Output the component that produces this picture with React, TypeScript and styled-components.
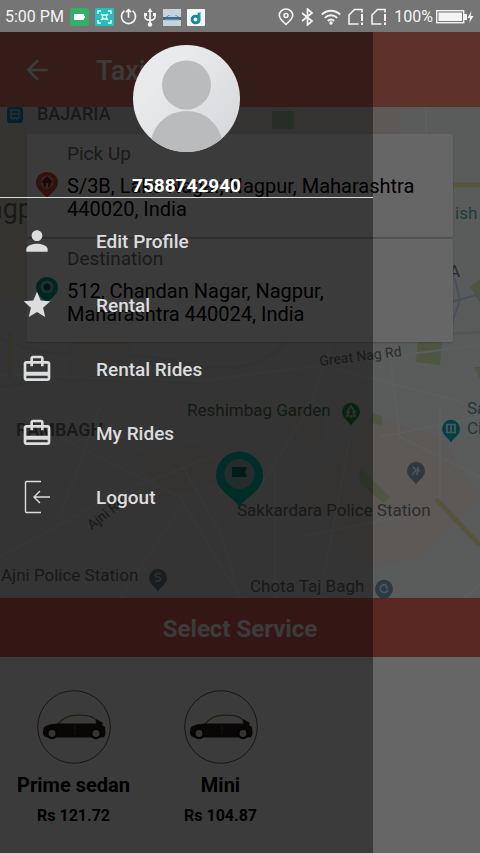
import React from "react";
import styled, { createGlobalStyle, css } from "styled-components";

const GlobalStyle = createGlobalStyle`
  *, *::before, *::after { box-sizing: border-box; }
  body { margin: 0; background: #fff; font-family: Roboto, "Liberation Sans", sans-serif; }
  h1, h2, p, ul { margin: 0; padding: 0; }
  ul { list-style: none; }
  button { font: inherit; border: 0; padding: 0; background: none; text-align: left; cursor: pointer; }
  svg { display: block; flex: none; }
`;

const Screen = styled.div`
  display: flex;
  flex-direction: column;
  min-height: 100vh;
`;

const StatusBar = styled.div`
  display: flex;
  align-items: center;
  justify-content: space-between;
  height: 32px;
  padding: 2px 6px 0 5px;
  background: #757575;
  color: #f4f4f4;
  font-size: 16px;
  line-height: 20px;
`;

const StatusGroup = styled.div<{ $gap: number }>`
  display: flex;
  align-items: center;
  gap: ${(p) => p.$gap}px;
  white-space: nowrap;
`;

const Stage = styled.div`
  position: relative;
  flex: 1;
  display: flex;
  flex-direction: column;
`;

const Page = styled.main`
  flex: 1;
  display: flex;
  flex-direction: column;
`;

const AppBar = styled.header`
  display: flex;
  align-items: center;
  gap: 43px;
  height: 75px;
  padding: 0 21px;
  background: #eb7a6c;
  color: #fff;
`;

const BackButton = styled.button`
  color: inherit;
`;

const Title = styled.h1`
  padding-top: 2px;
  font-size: 27px;
  font-weight: 500;
  line-height: 32px;
`;

const MapArea = styled.section`
  position: relative;
  isolation: isolate;
  flex: 1;
  padding: 27px;
  overflow: hidden;
  background: #e2e3e3;
`;

const MapDrawing = styled.svg`
  position: absolute;
  inset: 0;
  z-index: -1;
  width: 100%;
  height: 100%;
`;

const Place = styled.span<{ $x: number; $y: number; $color?: string; $size?: number; $bold?: boolean; $turn?: number }>`
  position: absolute;
  z-index: -1;
  left: ${(p) => p.$x}px;
  top: ${(p) => p.$y}px;
  color: ${(p) => p.$color ?? "#6c6e70"};
  font-size: ${(p) => p.$size ?? 17}px;
  font-weight: ${(p) => (p.$bold ? 500 : 400)};
  line-height: 20px;
  white-space: pre;
  ${(p) => p.$turn && css`transform: rotate(${p.$turn}deg);`}
`;

const Marker = styled.svg<{ $x: number; $y: number }>`
  position: absolute;
  z-index: -1;
  left: ${(p) => p.$x}px;
  top: ${(p) => p.$y}px;
`;

const Cards = styled.div`
  display: grid;
  gap: 2px;
`;

const Card = styled.button`
  display: grid;
  grid-template-columns: 24px 1fr;
  column-gap: 8px;
  align-content: start;
  width: 100%;
  height: 103px;
  padding: 8px 28px 8px 8px;
  border-radius: 2px;
  background: #fff;
  box-shadow: 0 1px 2px rgba(0, 0, 0, 0.2);
`;

const CardLabel = styled.span`
  grid-column: 2;
  color: #757575;
  font-size: 19px;
  line-height: 24px;
`;

const CardPin = styled.span`
  padding-top: 5px;
`;

const Address = styled.span`
  padding-top: 9px;
  color: #000;
  font-size: 20px;
  line-height: 23px;
`;

const ServiceBand = styled.h2`
  padding: 16px 0 13px;
  background: #e16557;
  color: #fff;
  font-size: 24px;
  font-weight: 700;
  line-height: 30px;
  text-align: center;
`;

const Services = styled.ul`
  display: flex;
  min-height: 196px;
  padding-top: 33px;
  background: #fff;
`;

const ServiceButton = styled.button`
  display: flex;
  flex-direction: column;
  align-items: center;
  width: 147px;
  color: #000;
  font-weight: 700;
`;

const ServiceName = styled.span`
  padding-top: 9px;
  font-size: 20px;
  line-height: 24px;
`;

const ServicePrice = styled.span`
  padding-top: 9px;
  font-size: 16px;
  line-height: 20px;
`;

const Scrim = styled.div`
  position: absolute;
  inset: 0;
  background: rgba(0, 0, 0, 0.6);
`;

const Drawer = styled.aside`
  position: absolute;
  inset: 0 auto 0 0;
  width: 373px;
  max-width: 85%;
  background: rgba(0, 0, 0, 0.42);
`;

const Account = styled.div`
  display: flex;
  flex-direction: column;
  align-items: center;
  gap: 23px;
  padding-top: 13px;
  border-bottom: 1px solid #dcdcdc;
  color: #fff;
  font-size: 19px;
  font-weight: 700;
  line-height: 22px;
`;

const Menu = styled.ul`
  padding: 11px 0;
`;

const MenuButton = styled.button`
  display: flex;
  align-items: center;
  gap: 43px;
  width: 100%;
  height: 64px;
  padding: 0 21px;
  color: #dcdddf;
  font-size: 19px;
  font-weight: 500;
  line-height: 24px;
`;

const MenuLabel = styled.span`
  padding-top: 2px;
`;

const BatteryApp = () => (
  <svg width="19" height="18" viewBox="0 0 19 18">
    <rect width="19" height="18" rx="2" fill="#35ae68" />
    <rect x="4" y="6" width="10" height="6" rx="1" fill="#fff" />
    <rect x="14" y="8" width="1" height="2" fill="#fff" />
  </svg>
);

const ScanApp = () => (
  <svg width="19" height="18" viewBox="0 0 19 18" fill="none" stroke="#e9ffff" strokeWidth="1.4">
    <rect width="19" height="18" rx="1" fill="#27bdb9" stroke="none" />
    <path d="M3 6V3h3M13 3h3v3M3 12v3h3M13 15h3v-3M6 6l2 2M13 6l-2 2M6 12l2-2M13 12l-2-2" />
    <rect x="7.5" y="7" width="4" height="4" />
  </svg>
);

const PowerIcon = () => (
  <svg width="17" height="18" viewBox="0 0 17 18" fill="none" stroke="#f4f4f4" strokeWidth="1.7" strokeLinecap="round">
    <path d="M4 3.2a7 7 0 1 0 9 0M8.500 2v7M6.500 3.600l2-2 2 2" />
  </svg>
);

const UsbIcon = () => (
  <svg width="14" height="19" viewBox="0 0 14 19" fill="none" stroke="#f4f4f4" strokeWidth="1.7">
    <path d="M7 3v13M2 6v3c0 2 1.500 3 5 3.500M12 6v3c0 2-1.500 3-5 3.500" />
    <path d="M7 0l2.500 4h-5z" fill="#f4f4f4" stroke="none" />
    <rect x="1" y="5" width="3" height="3" fill="#f4f4f4" stroke="none" />
    <rect x="10" y="5" width="3" height="3" fill="#f4f4f4" stroke="none" />
    <circle cx="7" cy="16.500" r="2.200" fill="#f4f4f4" stroke="none" />
  </svg>
);

const CarApp = () => (
  <svg width="18" height="17" viewBox="0 0 18 17">
    <rect width="18" height="17" fill="#c9d3da" />
    <path d="M0 8h3l3-2h7l3 2h2v3H0z" fill="#3f6a88" />
    <path d="M4 8l3-2h5l3 2z" fill="#b7d3e4" />
    <path d="M2 11h14" stroke="#8eb3cc" />
  </svg>
);

const DApp = () => (
  <svg width="18" height="17" viewBox="0 0 18 17">
    <rect width="18" height="17" rx="1" fill="#f3f8fa" />
    <circle cx="8.500" cy="10.500" r="3.400" fill="none" stroke="#1781a6" strokeWidth="2.800" />
    <path d="M13.500 2v9c0 2-1 3-2.500 4l-.5-11c2 0 3-1 3-2z" fill="#1a93a8" />
  </svg>
);

const LocationIcon = () => (
  <svg width="16" height="18" viewBox="0 0 16 18" fill="none" stroke="#f4f4f4" strokeWidth="1.600">
    <path d="M8 16.500C4 13 1.300 10.500 1.300 7.300a6.700 6.300 0 0 1 13.400 0C14.700 10.500 12 13 8 16.500z" />
    <circle cx="8" cy="7.500" r="2" />
  </svg>
);

const BluetoothIcon = () => (
  <svg width="13" height="18" viewBox="0 0 13 18" fill="none" stroke="#f4f4f4" strokeWidth="1.700">
    <path d="M1 5l10 8-4.500 4V1L11 5 1 13" />
  </svg>
);

const WifiIcon = () => (
  <svg width="20" height="16" viewBox="0 0 20 16" fill="none" stroke="#f4f4f4" strokeWidth="1.800">
    <path d="M.8 5.500c5.300-5 13-5 18.400 0M3.800 8.800c3.600-3.400 8.800-3.400 12.400 0M6.800 12c2-1.800 4.400-1.800 6.400 0" />
    <circle cx="10" cy="14" r="1.700" fill="#f4f4f4" stroke="none" />
  </svg>
);

const SimIcon = () => (
  <svg width="16" height="18" viewBox="0 0 16 18" fill="none" stroke="#f4f4f4" strokeWidth="1.600">
    <path d="M10.500 16H1V7l5.500-5.500h7.500v3" />
    <path d="M14 6v7M14 14.500v2.500" strokeWidth="2" />
  </svg>
);

const BatteryIcon = () => (
  <svg width="38" height="14" viewBox="0 0 38 14" fill="#f4f4f4">
    <rect x=".7" y=".7" width="27" height="12" fill="none" stroke="#f4f4f4" strokeWidth="1.400" />
    <rect x="2.500" y="2.500" width="23.500" height="8.500" />
    <rect x="28" y="4" width="3" height="6" />
    <path d="M35.500 1L31.500 8h2.700l-1 5 4.300-7h-2.800z" />
  </svg>
);

const ArrowBack = () => (
  <svg width="32" height="32" viewBox="0 0 24 24" fill="currentColor" aria-hidden="true">
    <path d="M20 11H7.830l5.590-5.590L12 4l-8 8 8 8 1.410-1.410L7.830 13H20v-2z" />
  </svg>
);

const AvatarPicture = () => (
  <svg width="107" height="107" viewBox="0 0 107 107" role="img" aria-label="Profile picture">
    <defs>
      <linearGradient id="face" x1="0" y1="0" x2="1" y2="1">
        <stop offset=".3" stopColor="#e9eaec" />
        <stop offset="1" stopColor="#d3d5d8" />
      </linearGradient>
      <clipPath id="disc"><circle cx="53.500" cy="53.500" r="53.500" /></clipPath>
    </defs>
    <g clipPath="url(#disc)">
      <rect width="107" height="107" fill="url(#face)" />
      <circle cx="53.500" cy="40" r="24.500" fill="#b9bbbd" />
      <path d="M17 107V101C19 80 34 66 53.500 66S88 80 90 101v6z" fill="#b9bbbd" />
    </g>
  </svg>
);

const menuPaths = {
  person: "M12 12c2.210 0 4-1.790 4-4s-1.790-4-4-4-4 1.790-4 4 1.790 4 4 4zm0 2c-2.670 0-8 1.340-8 4v2h16v-2c0-2.660-5.330-4-8-4z",
  star: "M12 17.270L18.180 21l-1.640-7.030L22 9.240l-7.190-.61L12 2 9.190 8.630 2 9.240l5.460 4.730L5.820 21z",
  travel:
    "M20 6h-3V4c0-1.110-.89-2-2-2H9c-1.110 0-2 .89-2 2v2H4c-1.110 0-2 .89-2 2v11c0 1.110.89 2 2 2h16c1.110 0 2-.89 2-2V8c0-1.110-.89-2-2-2zM9 4h6v2H9V4zm11 15H4v-2h16v2zm0-5H4V8h3v2h2V8h6v2h2V8h3v6z",
};

type MenuIconName = keyof typeof menuPaths | "logout";

const MenuIcon = ({ name }: { name: MenuIconName }) =>
  name === "logout" ? (
    <svg width="32" height="34" viewBox="0 0 32 34" fill="none" stroke="currentColor" strokeWidth="1.400" aria-hidden="true">
      <path d="M20 1.500H5.500a1 1 0 0 0-1 1v29a1 1 0 0 0 1 1H20M29 17H13M19 11l-6 6 6 6" />
    </svg>
  ) : (
    <svg width="32" height="32" viewBox="0 0 24 24" fill="currentColor" aria-hidden="true">
      <path d={menuPaths[name]} />
    </svg>
  );

const AddressPin = ({ kind }: { kind: "pickup" | "drop" }) => {
  const pickup = kind === "pickup";
  return (
    <svg width="24" height="28" viewBox="0 0 24 28" aria-hidden="true">
      <path d="M12 27C8 22 1 18.500 1 11.500a11 10.500 0 0 1 22 0C23 18.500 16 22 12 27z" fill={pickup ? "#d9503e" : "#00a68c"} />
      <circle cx="12" cy="11" r="6.500" fill={pickup ? "#e5a79c" : "#7fd0c2"} />
      {pickup ? (
        <path d="M12 5l6 6-2 1-1 4h-2v-4h-2v4H9l-1-4-2-1z" fill="#7c2c22" />
      ) : (
        <circle cx="12" cy="11" r="3.500" fill="#00604f" />
      )}
    </svg>
  );
};

const CarBadge = () => (
  <svg width="74" height="74" viewBox="0 0 74 74" aria-hidden="true">
    <circle cx="37" cy="37" r="36.300" fill="none" stroke="#6e5a4e" strokeWidth="1" />
    <path d="M21 34c5-6 10-8.500 18-8.800 11-.4 16 .5 20 4.800l1 6H21z" fill="#fff" stroke="#9a7c3c" strokeWidth="1.300" />
    <path d="M21 33.500c-7 .5-12 1.500-14.500 4.500l-.5 5c0 2 1 4 4 4.500H65c2.500 0 3.500-2 3.500-4.500l-.5-6-3-2 1-2-7-4 .5 4.500z" fill="#2c1c14" />
    <path d="M38 36v9M36 38h3" stroke="#754c2c" strokeWidth="1" />
    {[15, 59].map((x) => (
      <g key={x}>
        <circle cx={x} cy="43.500" r="5.800" fill="#1d130f" />
        <circle cx={x} cy="43.500" r="3.400" fill="#e8e2d8" />
      </g>
    ))}
  </svg>
);

const pinOutline = "M10 24C8.500 19.500 1 16.500 1 9.800a9 9 0 0 1 18 0C19 16.500 11.500 19.500 10 24z";

const PlaceMarker = ({ x, y, color, glyph }: { x: number; y: number; color: string; glyph: string }) => (
  <Marker $x={x} $y={y} width="20" height="24" viewBox="0 0 20 24">
    <path d={pinOutline} fill={color} />
    <path d={glyph} fill="none" stroke="#c8d4d6" strokeWidth="1.700" />
  </Marker>
);

const CityMap = () => (
  <>
    <MapDrawing viewBox="0 0 480 491" preserveAspectRatio="xMidYMin slice" aria-hidden="true">
      <path d="M190 0h210v27H190z" fill="#e6ded6" />
      <path d="M272 4h22v18h-22z" fill="#a9cca4" />
      <path d="M0 20h26v170H0z" fill="#e4dbd2" />
      <path d="M370 310l70 20 40 60-60 60-50 10-70-70z" fill="#e5deda" />
      <path d="M70 235h60v40H70zM130 345l70-8 30 34-60 20zM280 310h45v25h-30z" fill="#e4dcd4" />
      <path d="M418 233l24 3-2 22-24-3zM470 180l10-8v24zM372 306l10 4v8l-10-2zM360 360l30 30-6 6-25-20zM474 260h6v12z" fill="#bed6a4" />
      <path d="M0 231c60 30 100 5 190 26 60 12 80-5 105-30l90 4 95-6M0 280l80-12 120 8" fill="none" stroke="#cfd8dd" strokeWidth="3" />
      <path d="M453 165l7 28-9 26M451 195l29-8" fill="none" stroke="#b2c9de" strokeWidth="2" />
      <path
        d="M426 0v27M0 268l200 6 280-36M330 240l-20 60-50 80M390 250l10 80 80 40M0 450l110-60 100-40M60 330l120 60 60 100M180 355l40 70 20 66M275 350v141M350 330l-30 161M440 300v100M380 330l100-20M465 491l15-14M300 430l100-20M330 260l150 40M120 491l60-90M100 300l-40 110"
        fill="none"
        stroke="#e8eaea"
        strokeWidth="2"
      />
      <path d="M453 78h27M436 392l44 46" fill="none" stroke="#d8d496" strokeWidth="5" />
      <path d="M10 225v45" fill="none" stroke="#e4d9b4" strokeWidth="4" />
    </MapDrawing>
    <Marker $x={7} $y={0} width="16" height="16" viewBox="0 0 16 16">
      <rect width="16" height="16" rx="3" fill="#2092c8" />
      <path d="M4 3h8v8H4zM4 7h8M5 13l2-2M11 13l-2-2" fill="none" stroke="#a6c6d6" strokeWidth="1.500" />
    </Marker>
    <Place $x={37} $y={-3} $size={18} $bold>BAJARIA</Place>
    <Place $x={-12} $y={92} $size={27}>agp</Place>
    <Place $x={455} $y={96} $color="#4f9a97">ish</Place>
    <Place $x={449} $y={154}>A</Place>
    <Place $x={319} $y={239} $size={14} $turn={-7}>Great Nag Rd</Place>
    <Place $x={187} $y={293} $color="#437a50">Reshimbag Garden</Place>
    <Place $x={16} $y={313} $size={18} $bold>RAMBAGH</Place>
    <Place $x={467} $y={291} $color="#4f8a92">{"Sa\nCi"}</Place>
    <Place $x={84} $y={396} $size={14} $turn={-38}>Ajni Rd</Place>
    <Place $x={237} $y={393}>Sakkardara Police Station</Place>
    <Place $x={1} $y={458}>Ajni Police Station</Place>
    <Place $x={250} $y={469}>Chota Taj Bagh</Place>
    <PlaceMarker x={341} y={295} color="#2f9a48" glyph="M10 4l-4 6h2l-2 4h8l-2-4h2zM10 14v2" />
    <PlaceMarker x={441} y={312} color="#00a3b4" glyph="M6 6v7M10 6v7M14 6v7M5 5.500h10M5 13.500h10" />
    <PlaceMarker x={406} y={354} color="#7890a0" glyph="M6 14l4-5-3-3M10 9l4 1M12 6l-1 8" />
    <PlaceMarker x={148} y={461} color="#73828c" glyph="M13 6c-7-2-7 3-3 3s4 5-3 4" />
    <PlaceMarker x={374} y={472} color="#6c97a6" glyph="M12 6a4 4 0 1 0 2 5M12 6l1 4" />
    <Marker $x={215} $y={344} width="49" height="58" viewBox="0 0 49 58">
      <path d="M24.500 57C20 46 1 41 1 24a23.500 23.500 0 0 1 47 0C48 41 29 46 24.500 57z" fill="#00c2aa" />
      <circle cx="24.500" cy="23" r="15" fill="#a3c4be" />
      <path d="M17 16h15l-2 5 2 5H17z" fill="#007a68" />
    </Marker>
  </>
);

const trips: { label: string; address: string; kind: "pickup" | "drop" }[] = [
  { label: "Pick Up", address: "S/3B, Lake Nagar, Nagpur, Maharashtra 440020, India", kind: "pickup" },
  { label: "Destination", address: "512, Chandan Nagar, Nagpur, Maharashtra 440024, India", kind: "drop" },
];

const services = [
  { name: "Prime sedan", price: "Rs 121.72" },
  { name: "Mini", price: "Rs 104.87" },
];

const menu: { label: string; icon: MenuIconName }[] = [
  { label: "Edit Profile", icon: "person" },
  { label: "Rental", icon: "star" },
  { label: "Rental Rides", icon: "travel" },
  { label: "My Rides", icon: "travel" },
  { label: "Logout", icon: "logout" },
];

export default function App() {
  return (
    <Screen>
      <GlobalStyle />
      <StatusBar>
        <StatusGroup $gap={6}>
          <span>5:00 PM</span>
          <BatteryApp />
          <ScanApp />
          <PowerIcon />
          <UsbIcon />
          <CarApp />
          <DApp />
        </StatusGroup>
        <StatusGroup $gap={7}>
          <LocationIcon />
          <BluetoothIcon />
          <WifiIcon />
          <SimIcon />
          <SimIcon />
          <StatusGroup $gap={3}>
            <span>100%</span>
            <BatteryIcon />
          </StatusGroup>
        </StatusGroup>
      </StatusBar>
      <Stage>
        <Page>
          <AppBar>
            <BackButton type="button" aria-label="Back"><ArrowBack /></BackButton>
            <Title>Taxi</Title>
          </AppBar>
          <MapArea>
            <CityMap />
            <Cards>
              {trips.map((t) => (
                <Card key={t.kind} type="button">
                  <CardLabel>{t.label}</CardLabel>
                  <CardPin><AddressPin kind={t.kind} /></CardPin>
                  <Address>{t.address}</Address>
                </Card>
              ))}
            </Cards>
          </MapArea>
          <ServiceBand>Select Service</ServiceBand>
          <Services>
            {services.map((s) => (
              <li key={s.name}>
                <ServiceButton type="button">
                  <CarBadge />
                  <ServiceName>{s.name}</ServiceName>
                  <ServicePrice>{s.price}</ServicePrice>
                </ServiceButton>
              </li>
            ))}
          </Services>
        </Page>
        <Scrim />
        <Drawer>
          <Account>
            <AvatarPicture />
            <p>7588742940</p>
          </Account>
          <nav>
            <Menu>
              {menu.map((m) => (
                <li key={m.label}>
                  <MenuButton type="button">
                    <MenuIcon name={m.icon} />
                    <MenuLabel>{m.label}</MenuLabel>
                  </MenuButton>
                </li>
              ))}
            </Menu>
          </nav>
        </Drawer>
      </Stage>
    </Screen>
  );
}
